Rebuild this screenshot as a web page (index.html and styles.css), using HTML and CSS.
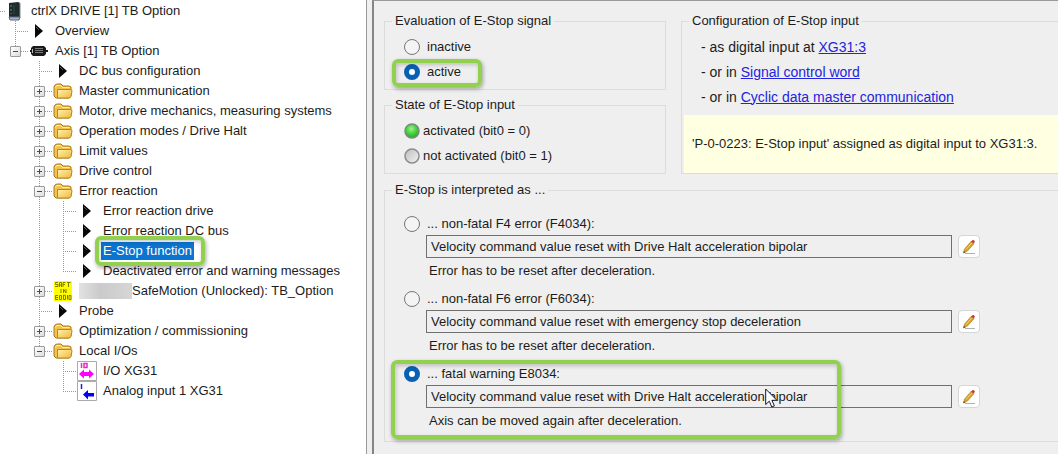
FILE: index.html
```html
<!DOCTYPE html>
<html lang="en">
<head>
<meta charset="utf-8">
<title>E-Stop function</title>
<link rel="stylesheet" href="styles.css">
</head>
<body>
<svg class="defs" aria-hidden="true">
  <defs>
    <linearGradient id="gold" x1="0" y1="0" x2="1" y2="1"><stop offset="0" stop-color="#fff3ae"/><stop offset="1" stop-color="#efb73a"/></linearGradient>
    <radialGradient id="greenLight" cx=".45" cy=".35" r=".6"><stop offset="0" stop-color="#a2f28c"/><stop offset=".5" stop-color="#4fd848"/><stop offset="1" stop-color="#2cae2c"/></radialGradient>
    <linearGradient id="greyLight" x1="0" y1="0" x2="1" y2="1"><stop offset="0" stop-color="#bcbcbc"/><stop offset="1" stop-color="#f4f4f4"/></linearGradient>
    <symbol id="folder" viewBox="0 0 20 16">
      <path d="M1 13V4l1-2 2-1h4l2 2h6l2 1v9l-2 2H3z" fill="#f3c14d" stroke="#a87818"/>
      <path d="M2.500 4.500l1-2h4l2 2h7" fill="none" stroke="#fff0a8"/>
      <path d="M4.500 6.500h13q1.500 0 1.500 1.500l-1 5.500q-.5 1.500-2 1.500H4.500z" fill="url(#gold)" stroke="#b88720"/>
    </symbol>
    <symbol id="arrow" viewBox="0 0 8 14"><path d="M0 0l8 7-8 7z" fill="#080808"/><path d="M1 3l3 3" stroke="#555"/></symbol>
    <symbol id="pen" viewBox="0 0 16 16">
      <path d="M4 14.500h10" stroke="#aab2ba" fill="none"/>
      <path d="M2.500 14l1-4L10 2.500l3 2.200L6.500 12z" fill="#d9a02b" stroke="#a87c28" stroke-width=".6"/>
      <path d="M5 10.500L11 3.800" stroke="#f6d569"/>
      <path d="M9.800 2.700l1.600-1.500q1.500-.4 2.500 1.200l-1 2.200z" fill="#cc3d35"/>
      <path d="M2.300 14.200l.6-2.200 1.600 1.300z" fill="#5c4420"/>
    </symbol>
  </defs>
</svg>
<main class="app">
  <nav class="tree" aria-label="Device tree">
    <div class="row root">
      <span class="icon"><svg width="14" height="20" viewBox="0 0 14 20"><path d="M1 2l9-1 2 1v16H1z" fill="#202b2c"/><path d="M11 2h1v15" stroke="#7f8b91" fill="none"/><path d="M3 4v2m0 2v2m0 2v1" stroke="#4b9c70"/><path d="M6 4v9" stroke="#38494b"/><path d="M1 16h11l-1 3H2z" fill="#a6b6c8" stroke="#596a80"/></svg></span>
      <span class="text">ctrlX DRIVE [1] TB Option</span>
    </div>
    <ul class="branch first">
      <li class="node"><div class="row"><span class="slot"></span><span class="icon"><svg width="8" height="14"><use href="#arrow"/></svg></span><span class="text">Overview</span></div></li>
      <li class="node">
        <div class="row"><span class="slot"><button class="toggle open" aria-label="Collapse Axis"></button></span><span class="icon"><svg width="18" height="12" viewBox="0 0 18 12"><path d="M3 1h11l2 2v2h2v2h-2v2l-2 2H3L1 9V7H0V5h1V3z" fill="#1a1a1a"/><path d="M5 3.500h8M5 5.500h8M5 7.500h8" stroke="#7a7a7a"/><path d="M2.500 4v4" stroke="#bbb"/></svg></span><span class="text">Axis [1] TB Option</span></div>
        <ul class="branch">
          <li class="node"><div class="row"><span class="slot"></span><span class="icon"><svg width="8" height="14"><use href="#arrow"/></svg></span><span class="text">DC bus configuration</span></div></li>
          <li class="node"><div class="row"><span class="slot"><button class="toggle" aria-label="Expand Master communication"></button></span><span class="icon"><svg width="20" height="16"><use href="#folder"/></svg></span><span class="text">Master communication</span></div></li>
          <li class="node"><div class="row"><span class="slot"><button class="toggle" aria-label="Expand Motor"></button></span><span class="icon"><svg width="20" height="16"><use href="#folder"/></svg></span><span class="text">Motor, drive mechanics, measuring systems</span></div></li>
          <li class="node"><div class="row"><span class="slot"><button class="toggle" aria-label="Expand Operation modes"></button></span><span class="icon"><svg width="20" height="16"><use href="#folder"/></svg></span><span class="text">Operation modes / Drive Halt</span></div></li>
          <li class="node"><div class="row"><span class="slot"><button class="toggle" aria-label="Expand Limit values"></button></span><span class="icon"><svg width="20" height="16"><use href="#folder"/></svg></span><span class="text">Limit values</span></div></li>
          <li class="node"><div class="row"><span class="slot"><button class="toggle" aria-label="Expand Drive control"></button></span><span class="icon"><svg width="20" height="16"><use href="#folder"/></svg></span><span class="text">Drive control</span></div></li>
          <li class="node">
            <div class="row"><span class="slot"><button class="toggle open" aria-label="Collapse Error reaction"></button></span><span class="icon"><svg width="20" height="16"><use href="#folder"/></svg></span><span class="text">Error reaction</span></div>
            <ul class="branch">
              <li class="node"><div class="row"><span class="slot"></span><span class="icon"><svg width="8" height="14"><use href="#arrow"/></svg></span><span class="text">Error reaction drive</span></div></li>
              <li class="node"><div class="row"><span class="slot"></span><span class="icon"><svg width="8" height="14"><use href="#arrow"/></svg></span><span class="text">Error reaction DC bus</span></div></li>
              <li class="node"><div class="row"><span class="slot"></span><span class="icon"><svg width="8" height="14"><use href="#arrow"/></svg></span><span class="text selected">E-Stop function<span class="mark mark-tree"></span></span></div></li>
              <li class="node"><div class="row"><span class="slot"></span><span class="icon"><svg width="8" height="14"><use href="#arrow"/></svg></span><span class="text">Deactivated error and warning messages</span></div></li>
            </ul>
          </li>
          <li class="node"><div class="row"><span class="slot"><button class="toggle" aria-label="Expand SafeMotion"></button></span><span class="icon"><svg width="20" height="20" viewBox="0 0 20 20"><path d="M1 0h18v20H1z" fill="#ffff00"/><path d="M5 1.500H2.500v2H5v2H2M6.500 6V1.500h2V6m-2-2h2M10 6V1.500h2.500M10 3.500h2M14 1.500h3.500M15.500 1v5M8 8v4m2.500 0V8l2.500 4V8M5 14.500H2.500v4H5M2.500 16.500H5M6.500 14.500h2v4h-2zM10.500 14v4.500h2v-4zM14.500 14v4.500M18 14.500h-2v4h2z" fill="none" stroke="#857e00"/></svg></span><span class="text"><span class="redacted"></span>SafeMotion (Unlocked): TB_Option</span></div></li>
          <li class="node"><div class="row"><span class="slot"></span><span class="icon"><svg width="8" height="14"><use href="#arrow"/></svg></span><span class="text">Probe</span></div></li>
          <li class="node"><div class="row"><span class="slot"><button class="toggle" aria-label="Expand Optimization"></button></span><span class="icon"><svg width="20" height="16"><use href="#folder"/></svg></span><span class="text">Optimization / commissioning</span></div></li>
          <li class="node">
            <div class="row"><span class="slot"><button class="toggle open" aria-label="Collapse Local I/Os"></button></span><span class="icon"><svg width="20" height="16"><use href="#folder"/></svg></span><span class="text">Local I/Os</span></div>
            <ul class="branch">
              <li class="node"><div class="row"><span class="slot"></span><span class="icon"><svg width="20" height="20" viewBox="0 0 20 20"><path d="M.5.500h19v19H.5z" fill="#fff" stroke="#aaa"/><path d="M4.500 2v5M7 2.500h3v4H7z" fill="none" stroke="#e52bc4" stroke-width="1.500"/><path d="M2 13l5-4.500V11h5V8.500l5 4.500-5 4.500V15H7v2.500z" fill="#ff00ff"/></svg></span><span class="text">I/O XG31</span></div></li>
              <li class="node"><div class="row"><span class="slot"></span><span class="icon"><svg width="20" height="20" viewBox="0 0 20 20"><path d="M.5.500h19v19H.5z" fill="#fff" stroke="#aaa"/><path d="M4.500 3v5" stroke="#2020d0" stroke-width="1.500"/><path d="M6 13.500L11 9v3h6v3.500h-6v3z" fill="#0000ff"/></svg></span><span class="text">Analog input 1 XG31</span></div></li>
            </ul>
          </li>
        </ul>
      </li>
    </ul>
  </nav>
  <section class="panel">
    <div class="top">
      <div class="stack">
        <fieldset class="group">
          <legend>Evaluation of E-Stop signal</legend>
          <label class="line choice"><input type="radio" name="evaluation">inactive</label>
          <label class="line choice"><input type="radio" name="evaluation" checked>active<span class="mark mark-active"></span></label>
        </fieldset>
        <fieldset class="group">
          <legend>State of E-Stop input</legend>
          <div class="line state"><svg width="16" height="16"><circle cx="8" cy="8" r="7" fill="url(#greenLight)" stroke="#7b8b7b" stroke-width="1.500"/></svg>activated (bit0 = 0)</div>
          <div class="line state"><svg width="16" height="16"><circle cx="8" cy="8" r="7" fill="url(#greyLight)" stroke="#8c8c8c" stroke-width="1.500"/></svg>not activated (bit0 = 1)</div>
        </fieldset>
      </div>
      <fieldset class="group cut config">
        <legend>Configuration of E-Stop input</legend>
        <div class="line">- as digital input at&nbsp;<a href="#input">XG31:3</a></div>
        <div class="line">- or in&nbsp;<a href="#signal">Signal control word</a></div>
        <div class="line">- or in&nbsp;<a href="#cyclic">Cyclic data master communication</a></div>
        <p class="notice">'P-0-0223: E-Stop input' assigned as digital input to XG31:3.</p>
      </fieldset>
    </div>
    <fieldset class="group cut modes">
      <legend>E-Stop is interpreted as ...</legend>
      <div class="mode">
        <label class="choice"><input type="radio" name="mode">... non-fatal F4 error (F4034):</label>
        <div class="entry"><input class="field" type="text" readonly aria-label="F4 reaction" value="Velocity command value reset with Drive Halt acceleration bipolar"><button class="edit" aria-label="Edit F4 reaction"><svg width="16" height="16"><use href="#pen"/></svg></button></div>
        <p class="hint">Error has to be reset after deceleration.</p>
      </div>
      <div class="mode">
        <label class="choice"><input type="radio" name="mode">... non-fatal F6 error (F6034):</label>
        <div class="entry"><input class="field" type="text" readonly aria-label="F6 reaction" value="Velocity command value reset with emergency stop deceleration"><button class="edit" aria-label="Edit F6 reaction"><svg width="16" height="16"><use href="#pen"/></svg></button></div>
        <p class="hint">Error has to be reset after deceleration.</p>
      </div>
      <div class="mode">
        <label class="choice"><input type="radio" name="mode" checked>... fatal warning E8034:</label>
        <div class="entry"><input class="field" type="text" readonly aria-label="E8 reaction" value="Velocity command value reset with Drive Halt acceleration bipolar"><button class="edit" aria-label="Edit E8 reaction"><svg width="16" height="16"><use href="#pen"/></svg></button></div>
        <p class="hint">Axis can be moved again after deceleration.</p>
        <span class="mark mark-mode"></span>
        <svg class="cursor" width="13" height="20" viewBox="0 0 13 20"><path d="M.7 1v15.500l3.600-3.300 2.500 5.800 2.600-1.100-2.500-5.600h5z" fill="#fff" stroke="#14142a"/></svg>
      </div>
    </fieldset>
  </section>
</main>
</body>
</html>
```
FILE: styles.css
```css
* { box-sizing: border-box; }
body {
  margin: 0;
  font: 13px/16px "Liberation Sans", Arial, sans-serif;
  color: #1c1c1c;
  background: #efefef;
}
.defs { position: absolute; width: 0; height: 0; }
.app { display: flex; min-height: 100vh; overflow: hidden; }

/* device tree */
.tree {
  flex: 0 0 367px;
  padding-top: 1px;
  background: #fff;
  border-right: 1px solid #9a9a9a;
  white-space: nowrap;
}
.branch { list-style: none; margin: 0; padding: 0 0 0 24px; }
.branch.first { padding-left: 3px; }
.node {
  background-image:
    repeating-linear-gradient(to bottom, #999 0 1px, transparent 1px 2px),
    repeating-linear-gradient(to right, #999 0 1px, transparent 1px 2px);
  background-size: 1px 100%, 14px 1px;
  background-position: 12px 0, 12px 10px;
  background-repeat: no-repeat;
}
.node:last-child { background-size: 1px 10px, 14px 1px; }
.row { display: flex; align-items: center; height: 20px; }
.root {
  padding-left: 3px;
  background: repeating-linear-gradient(to right, #999 0 1px, transparent 1px 2px) 0 10px / 6px 1px no-repeat;
}
.slot, .icon { display: flex; flex: 0 0 24px; align-items: center; justify-content: center; }
.toggle {
  width: 11px;
  height: 11px;
  padding: 0;
  border: 1px solid #9a9a9a;
  border-radius: 1px;
  background:
    linear-gradient(#34488c, #34488c) center / 5px 1px no-repeat,
    linear-gradient(#34488c, #34488c) center / 1px 5px no-repeat,
    linear-gradient(135deg, #fff, #ddd);
}
.toggle.open {
  background:
    linear-gradient(#34488c, #34488c) center / 5px 1px no-repeat,
    linear-gradient(135deg, #fff, #ddd);
}
.text { display: flex; padding: 1px 2px; margin-left: 2px; }
.selected { position: relative; background: #0a74d0; color: #fff; }
.redacted {
  width: 53px;
  height: 16px;
  background: linear-gradient(to right, #e2e2e2, #cacaca 40%, #d6d6d6);
}

/* settings */
.panel {
  flex: 1;
  min-width: 0;
  margin-left: 5px;
  padding: 12px 0 12px 10px;
  border-left: 2px solid #858585;
  border-top: 1px solid #999;
}
.top {
  display: grid;
  grid-template-columns: minmax(240px, 282px) 1fr;
  gap: 15px;
  margin-bottom: 8px;
}
.stack { display: grid; gap: 7px; }
.group {
  min-width: 0;
  margin: 0;
  padding: 5px 0 5px 19px;
  border: 1px solid #dcdcdc;
}
.cut { border-right: 0; }
legend { height: 16px; margin-left: -12px; padding: 0 3px; }
.line { display: flex; align-items: center; height: 25px; }
.choice { position: relative; display: flex; align-items: center; gap: 7px; }
.state { gap: 3px; }
input[type="radio"] {
  appearance: none;
  flex: none;
  width: 16px;
  height: 16px;
  margin: 0;
  border: 1px solid #777;
  border-radius: 50%;
  background: #f4f4f4;
}
input[type="radio"]:checked { border: 5px solid #0860b4; background: #fff; }
a { color: #2323e0; }
.config { display: flex; flex-direction: column; padding-bottom: 0; }
.config .line { font-size: 14px; }
.notice {
  display: flex;
  flex: 1;
  align-items: center;
  margin: 6px 0 0 -17px;
  padding-left: 8px;
  background: #ffffe1;
}
.modes { display: grid; gap: 6px; padding: 15px 0 9px 19px; }
.mode { position: relative; }
.mode .choice { height: 21px; margin-bottom: 1px; }
.entry { display: flex; gap: 6px; margin-left: 22px; }
.field {
  flex: 0 1 526px;
  min-width: 0;
  height: 23px;
  padding: 0 4px;
  border: 1px solid #707070;
  background: #efefef;
  color: inherit;
  font: inherit;
}
.edit {
  display: grid;
  place-items: center;
  flex: none;
  width: 22px;
  height: 23px;
  padding: 0;
  border: 1px solid #d5d5da;
  border-radius: 4px;
  background: #fff;
}
.hint { margin: 0 0 0 25px; padding: 5px 0 3px; }

/* callouts laid over the controls */
.mark {
  position: absolute;
  border: 4px solid #92d050;
  border-radius: 6px;
  box-shadow: 1px 2px 4px #0005, inset 1px 2px 4px #0003;
  pointer-events: none;
}
.mark-tree { inset: -6px -11px -6px -6px; z-index: 1; }
.mark-active { left: -12px; top: 0; width: 90px; height: 28px; }
.mark-mode { left: -13px; top: -3px; width: 450px; height: 79px; }
.cursor { position: absolute; left: 361px; top: 25px; }
```
